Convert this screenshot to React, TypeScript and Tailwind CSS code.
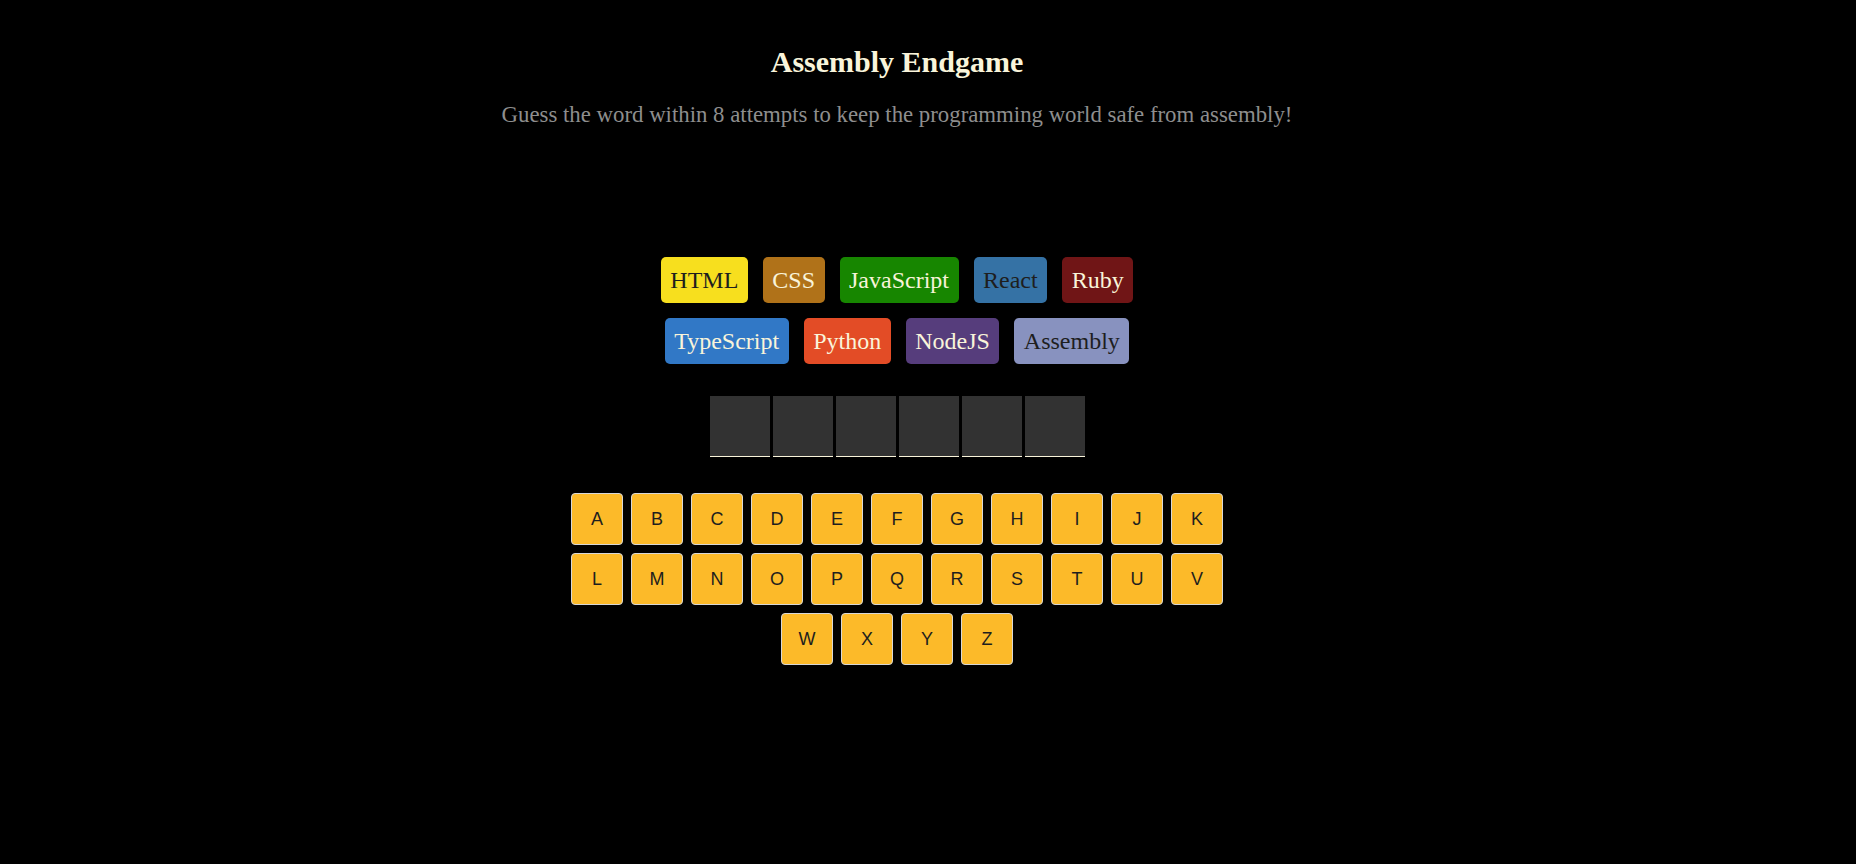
const languages = [
  { name: "HTML", bg: "bg-[#f7df1e]", text: "text-[#1e1e1e]" },
  { name: "CSS", bg: "bg-[#b07219]", text: "text-[#f9f4da]" },
  { name: "JavaScript", bg: "bg-[#178600]", text: "text-[#f9f4da]" },
  { name: "React", bg: "bg-[#3572a5]", text: "text-[#1e1e1e]" },
  { name: "Ruby", bg: "bg-[#701516]", text: "text-[#f9f4da]" },
  { name: "TypeScript", bg: "bg-[#3178c6]", text: "text-[#f9f4da]" },
  { name: "Python", bg: "bg-[#e34c26]", text: "text-[#f9f4da]" },
  { name: "NodeJS", bg: "bg-[#563d7c]", text: "text-[#f9f4da]" },
  { name: "Assembly", bg: "bg-[#8892bf]", text: "text-[#1e1e1e]" },
];

const keyRows = ["ABCDEFGHIJK", "LMNOPQRSTUV", "WXYZ"];

export default function App() {
  return (
    <div className="min-h-screen w-full bg-black font-['Liberation_Serif','Times_New_Roman',serif]">
      <main className="flex w-[1794px] flex-col items-center pt-[45px]">
        <header className="flex flex-col items-center gap-[23px]">
          <h1 className="text-[30px] font-bold leading-[34px] text-[#f9f4da]">
            Assembly Endgame
          </h1>
          <p className="text-[22.8px] leading-[26px] text-[#8e8e8e]">
            Guess the word within 8 attempts to keep the programming world safe from assembly!
          </p>
        </header>

        <section className="mt-[129px] flex max-w-[490px] flex-wrap justify-center gap-x-[15px] gap-y-[15px]">
          {languages.map((lang) => (
            <span
              key={lang.name}
              className={`rounded-[5px] px-[9.5px] py-[9px] text-[24px] leading-[28px] ${lang.bg} ${lang.text}`}
            >
              {lang.name}
            </span>
          ))}
        </section>

        <section className="mt-[32px] flex gap-[3px]">
          {Array.from({ length: 6 }).map((_, i) => (
            <span
              key={i}
              className="h-[61px] w-[60px] border-b border-[#f9f4da] bg-[#323232]"
            />
          ))}
        </section>

        <section className="mt-[36px] flex flex-col items-center gap-2">
          {keyRows.map((row) => (
            <div key={row} className="flex gap-2">
              {row.split("").map((letter) => (
                <button
                  key={letter}
                  className="flex h-[52px] w-[52px] items-center justify-center rounded-[4px] border border-[#d7d7d7] bg-[#fcba29] font-['Liberation_Sans',Arial,sans-serif] text-[18px] text-[#1e1e1e]"
                >
                  {letter}
                </button>
              ))}
            </div>
          ))}
        </section>
      </main>
    </div>
  );
}
